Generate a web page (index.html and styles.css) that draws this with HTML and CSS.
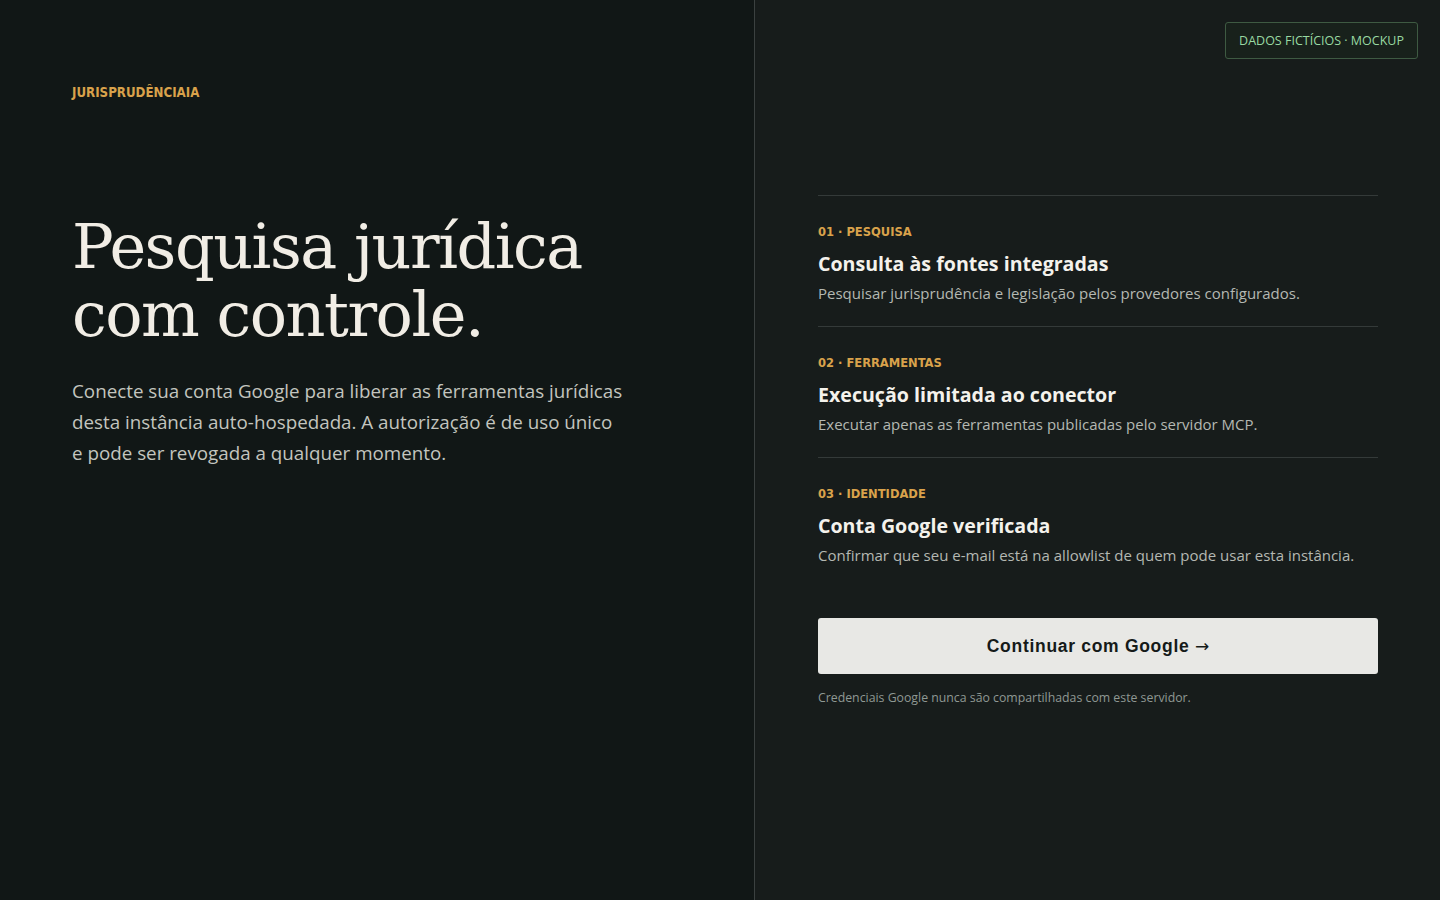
FILE: index.html
```html
<!DOCTYPE html>
<html lang="pt-BR">
<head>
<meta charset="utf-8">
<title>JurisprudênciaIA</title>
<link rel="stylesheet" href="styles.css">
</head>
<body>
<div class="page">
  <section class="intro">
    <div class="brand">JURISPRUDÊNCIAIA</div>
    <h1 class="headline">Pesquisa jurídica<br>com controle.</h1>
    <p class="lead">Conecte sua conta Google para liberar as ferramentas jurídicas desta instância auto-hospedada. A autorização é de uso único e pode ser revogada a qualquer momento.</p>
  </section>
  <section class="panel">
    <div class="badge">DADOS FICTÍCIOS · MOCKUP</div>
    <div class="steps">
      <div class="step">
        <div class="step-label">01 · PESQUISA</div>
        <h2 class="step-title">Consulta às fontes integradas</h2>
        <p class="step-desc">Pesquisar jurisprudência e legislação pelos provedores configurados.</p>
      </div>
      <div class="step">
        <div class="step-label">02 · FERRAMENTAS</div>
        <h2 class="step-title">Execução limitada ao conector</h2>
        <p class="step-desc">Executar apenas as ferramentas publicadas pelo servidor MCP.</p>
      </div>
      <div class="step step-last">
        <div class="step-label">03 · IDENTIDADE</div>
        <h2 class="step-title">Conta Google verificada</h2>
        <p class="step-desc">Confirmar que seu e-mail está na allowlist de quem pode usar esta instância.</p>
      </div>
      <button class="cta" type="button">Continuar com Google <span class="cta-arrow">→</span></button>
      <p class="note">Credenciais Google nunca são compartilhadas com este servidor.</p>
    </div>
  </section>
</div>
</body>
</html>
```

FILE: styles.css
```css
* { box-sizing: border-box; }
html, body { margin: 0; padding: 0; }
body {
  background: #111716;
  font-family: "Open Sans", "Noto Sans", sans-serif;
  color: #e8e6e0;
}
.page {
  display: grid;
  grid-template-columns: 755px 1fr;
  height: 900px;
}
.intro {
  background: #111716;
  border-right: 1px solid #3b4140;
  padding: 85px 72px 0 72px;
}
.brand {
  font-family: "DejaVu Sans Condensed", "DejaVu Sans", sans-serif;
  font-weight: 700;
  font-size: 13.2px;
  color: #d9a24b;
  line-height: 16px;
}
.headline {
  margin: 112px 0 0 0;
  font-family: "DejaVu Serif", serif;
  font-weight: 400;
  font-size: 62px;
  line-height: 68px;
  color: #f1ede5;
  letter-spacing: -1.5px;
}
.lead {
  margin: 27px 0 0 0;
  font-size: 18.8px;
  line-height: 31px;
  color: #c3c5bf;
  max-width: 553px;
}
.panel {
  background: #171c1b;
  position: relative;
  display: flex;
  align-items: center;
  padding: 2px 62px 0 63px;
}
.badge {
  position: absolute;
  top: 22px;
  right: 22px;
  border: 1px solid #3e5a42;
  background: #18211b;
  border-radius: 3px;
  color: #98d9a2;
  font-size: 12.5px;
  padding: 9px 13px;
  line-height: 17px;
}
.steps {
  width: 100%;
  border-top: 1px solid #343a39;
}
.step {
  border-bottom: 1px solid #343a39;
  padding: 28px 0 22px 0;
}
.step-last { border-bottom: none; }
.step-label {
  font-family: "DejaVu Sans Condensed", "DejaVu Sans", sans-serif;
  font-weight: 700;
  font-size: 12.8px;
  line-height: 16px;
  color: #d9a24b;
}
.step-title {
  margin: 10px 0 0 0;
  font-size: 19.6px;
  line-height: 28px;
  font-weight: 700;
  color: #f4f2ec;
}
.step-desc {
  margin: 4px 0 0 0;
  font-size: 15px;
  line-height: 22px;
  color: #b4b8b2;
}
.cta {
  display: block;
  width: 100%;
  height: 56px;
  margin-top: 30px;
  border: none;
  border-radius: 3px;
  background: #e8e8e5;
  color: #151a19;
  font-family: "Liberation Sans", Arial, sans-serif;
  font-weight: 700;
  font-size: 17.5px;
  letter-spacing: 0.7px;
  cursor: pointer;
}
.cta-arrow {
  font-family: "DejaVu Sans", sans-serif;
  font-weight: 400;
  font-size: 17px;
  letter-spacing: 0;
}
.note {
  margin: 15px 0 0 0;
  font-size: 12.3px;
  line-height: 18px;
  color: #8f9893;
}
```
